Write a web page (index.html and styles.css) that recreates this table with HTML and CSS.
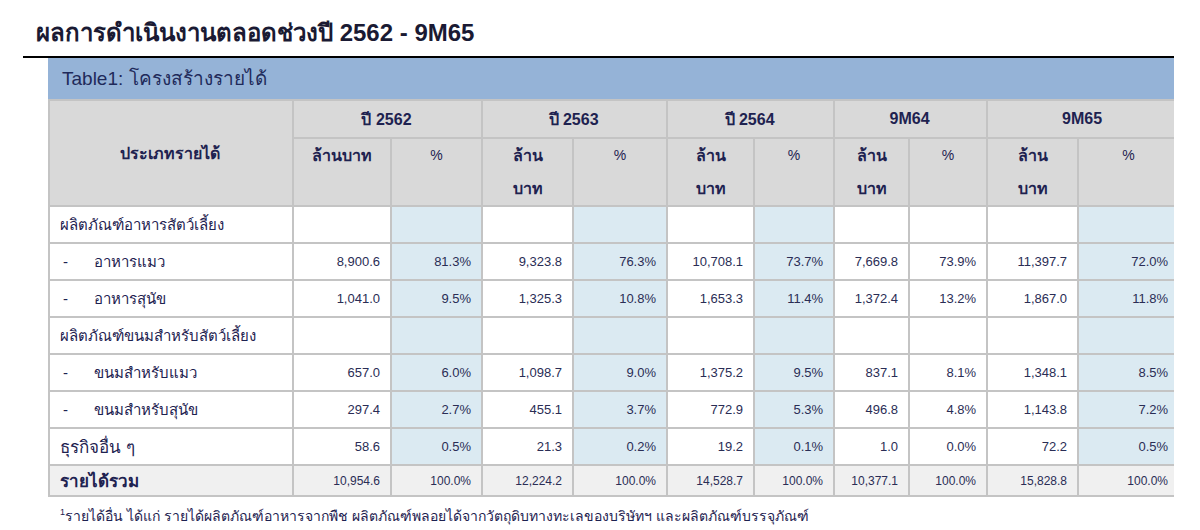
FILE: index.html
```html
<!DOCTYPE html>
<html lang="th">
<head>
<meta charset="utf-8">
<link rel="stylesheet" href="styles.css">
</head>
<body>
<h1 class="title">ผลการดำเนินงานตลอดช่วงปี 2562 - 9M65</h1>
<div class="rule"></div>
<div class="panel">
  <div class="caption">Table1: โครงสร้างรายได้</div>
  <div class="clip">
  <table class="rev">
    <colgroup>
      <col class="c-type">
      <col class="c98"><col class="c91">
      <col class="c91"><col class="c94">
      <col class="c87"><col class="c80">
      <col class="c75"><col class="c78">
      <col class="c91"><col class="c99">
    </colgroup>
    <thead>
      <tr class="h1">
        <th rowspan="2" class="type">ประเภทรายได้</th>
        <th colspan="2">ปี 2562</th>
        <th colspan="2">ปี 2563</th>
        <th colspan="2">ปี 2564</th>
        <th colspan="2">9M64</th>
        <th colspan="2">9M65</th>
      </tr>
      <tr class="h2">
        <th>ล้านบาท</th><th class="pct-h">%</th>
        <th>ล้าน<br>บาท</th><th class="pct-h">%</th>
        <th>ล้าน<br>บาท</th><th class="pct-h">%</th>
        <th>ล้าน<br>บาท</th><th class="pct-h">%</th>
        <th>ล้าน<br>บาท</th><th class="pct-h">%</th>
      </tr>
    </thead>
    <tbody>
      <tr class="group">
        <td class="lbl">ผลิตภัณฑ์อาหารสัตว์เลี้ยง</td>
        <td></td><td class="b"></td><td></td><td class="b"></td><td></td><td class="b"></td><td></td><td></td><td></td><td class="b"></td>
      </tr>
      <tr>
        <td class="lbl sub"><span class="dash">-</span>อาหารแมว</td>
        <td>8,900.6</td><td class="b">81.3%</td><td>9,323.8</td><td class="b">76.3%</td><td>10,708.1</td><td class="b">73.7%</td><td>7,669.8</td><td>73.9%</td><td>11,397.7</td><td class="b">72.0%</td>
      </tr>
      <tr>
        <td class="lbl sub"><span class="dash">-</span>อาหารสุนัข</td>
        <td>1,041.0</td><td class="b">9.5%</td><td>1,325.3</td><td class="b">10.8%</td><td>1,653.3</td><td class="b">11.4%</td><td>1,372.4</td><td>13.2%</td><td>1,867.0</td><td class="b">11.8%</td>
      </tr>
      <tr class="group">
        <td class="lbl">ผลิตภัณฑ์ขนมสำหรับสัตว์เลี้ยง</td>
        <td></td><td class="b"></td><td></td><td class="b"></td><td></td><td class="b"></td><td></td><td></td><td></td><td class="b"></td>
      </tr>
      <tr>
        <td class="lbl sub"><span class="dash">-</span>ขนมสำหรับแมว</td>
        <td>657.0</td><td class="b">6.0%</td><td>1,098.7</td><td class="b">9.0%</td><td>1,375.2</td><td class="b">9.5%</td><td>837.1</td><td>8.1%</td><td>1,348.1</td><td class="b">8.5%</td>
      </tr>
      <tr>
        <td class="lbl sub"><span class="dash">-</span>ขนมสำหรับสุนัข</td>
        <td>297.4</td><td class="b">2.7%</td><td>455.1</td><td class="b">3.7%</td><td>772.9</td><td class="b">5.3%</td><td>496.8</td><td>4.8%</td><td>1,143.8</td><td class="b">7.2%</td>
      </tr>
      <tr class="other">
        <td class="lbl big">ธุรกิจอื่น ๆ</td>
        <td>58.6</td><td class="b">0.5%</td><td>21.3</td><td class="b">0.2%</td><td>19.2</td><td class="b">0.1%</td><td>1.0</td><td>0.0%</td><td>72.2</td><td class="b">0.5%</td>
      </tr>
      <tr class="total">
        <td class="lbl tot">รายได้รวม</td>
        <td>10,954.6</td><td>100.0%</td><td>12,224.2</td><td>100.0%</td><td>14,528.7</td><td>100.0%</td><td>10,377.1</td><td>100.0%</td><td>15,828.8</td><td>100.0%</td>
      </tr>
    </tbody>
  </table>
  </div>
  <p class="note"><sup>1</sup>รายได้อื่น ได้แก่ รายได้ผลิตภัณฑ์อาหารจากพืช ผลิตภัณฑ์พลอยได้จากวัตถุดิบทางทะเลของบริษัทฯ และผลิตภัณฑ์บรรจุภัณฑ์</p>
</div>
</body>
</html>
```

FILE: styles.css
```css
html, body {
  margin: 0;
  padding: 0;
  background: #ffffff;
  font-family: "Liberation Sans", "Noto Sans", "DejaVu Sans", sans-serif;
  color: #1e2250;
}

.title {
  margin: 0;
  padding: 19px 0 0 36px;
  height: 37px;
  font-size: 24px;
  line-height: 28px;
  font-weight: bold;
  color: #1a1a33;
}

.rule {
  margin-left: 23px;
  width: 1151px;
  border-top: 2px solid #000000;
}

.panel {
  margin-left: 48px;
  width: 1126px;
}

.caption {
  height: 41px;
  background: #95b3d7;
  padding-left: 14px;
  font-size: 19px;
  line-height: 41px;
  color: #1f2a5a;
}

.clip {
  overflow: hidden;
  width: 1126px;
}

.rev {
  border-collapse: collapse;
  table-layout: fixed;
  width: 1130px;
}

.c-type { width: 244px; }
.c98 { width: 98px; }
.c91 { width: 91px; }
.c94 { width: 94px; }
.c87 { width: 87px; }
.c80 { width: 80px; }
.c75 { width: 75px; }
.c78 { width: 78px; }
.c99 { width: 101px; }

.rev th, .rev td {
  border: 2px solid #c4c4c4;
  padding: 0 10px 0 8px;
}

.rev th {
  background: #d9d9d9;
  font-weight: bold;
  color: #1e2250;
  text-align: center;
}

.rev tr.h1 { height: 38px; }
.rev tr.h1 th { font-size: 16px; }

.rev tr.h2 { height: 67px; }
.rev tr.h2 th {
  vertical-align: top;
  font-size: 16px;
  line-height: 33px;
  padding: 0 4px;
}
.rev tr.h2 th.pct-h { font-weight: normal; font-size: 14px; }

.rev th.type {
  font-size: 17px;
  vertical-align: middle;
}

.rev tbody tr { height: 37px; }
.rev tbody td {
  text-align: right;
  font-size: 13px;
  color: #2a2d55;
  background: #ffffff;
}

.rev tbody td.b { background: #dbeaf2; }

.rev tbody td.lbl {
  text-align: left;
  padding-left: 10px;
  font-size: 15px;
  color: #1e2250;
}

.rev tbody td.sub .dash {
  display: inline-block;
  width: 31px;
  padding-left: 3px;
}

.rev tbody td.big { font-size: 17px; }

.rev tr.total { height: 31px; }
.rev tr.total td { background: #f0f0f0; font-size: 12px; }
.rev tr.total td.tot { font-size: 17px; font-weight: bold; }

.note {
  margin: 8px 0 0 12px;
  font-size: 14px;
  color: #1e2250;
}
.note sup { font-size: 9px; }
```
